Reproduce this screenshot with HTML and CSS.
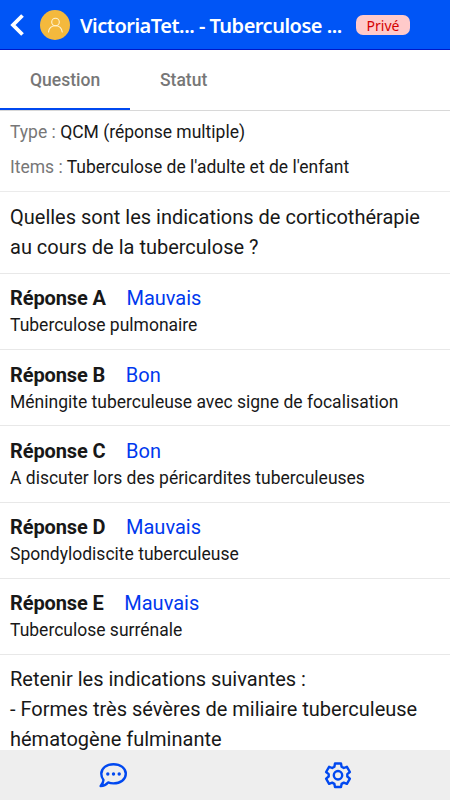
FILE: index.html
```html
<!DOCTYPE html>
<html lang="fr">
<head>
<meta charset="utf-8">
<title>Tuberculose</title>
<link rel="stylesheet" href="styles.css">
</head>
<body>
<div class="app">
  <header class="header">
    <svg class="back" viewBox="0 0 16 24"><path d="M13.500 2.500 4 12l9.500 9.500" /></svg>
    <span class="avatar"><svg viewBox="0 0 30 30"><circle cx="15.500" cy="12" r="3.800"/><path d="M8.500 22c.5-4.200 3.300-6.200 7-6.200s6.200 2 6.700 6.200"/></svg></span>
    <h1 class="title">VictoriaTet... - Tuberculose ...</h1>
    <span class="badge">Privé</span>
  </header>
  <nav class="tabs">
    <a class="tab tab-active">Question</a>
    <a class="tab">Statut</a>
  </nav>
  <main class="content">
    <section class="meta">
      <p><span class="label">Type :</span> <span class="type">QCM (réponse multiple)</span></p>
      <p><span class="label">Items :</span> <span class="items">Tuberculose de l'adulte et de l'enfant</span></p>
    </section>
    <section class="question">Quelles sont les indications de corticothérapie<br>au cours de la tuberculose ?</section>
    <section class="answer"><div class="head"><b>Réponse A</b><span class="verdict">Mauvais</span></div><p>Tuberculose pulmonaire</p></section>
    <section class="answer"><div class="head"><b>Réponse B</b><span class="verdict">Bon</span></div><p>Méningite tuberculeuse avec signe de focalisation</p></section>
    <section class="answer"><div class="head"><b>Réponse C</b><span class="verdict">Bon</span></div><p>A discuter lors des péricardites tuberculeuses</p></section>
    <section class="answer"><div class="head"><b>Réponse D</b><span class="verdict">Mauvais</span></div><p>Spondylodiscite tuberculeuse</p></section>
    <section class="answer"><div class="head"><b>Réponse E</b><span class="verdict">Mauvais</span></div><p>Tuberculose surrénale</p></section>
    <section class="comment">Retenir les indications suivantes :<br>- Formes très sévères de miliaire tuberculeuse<br>hématogène fulminante</section>
  </main>
  <footer class="footer">
    <div class="action"><svg class="chat" viewBox="0 0 28 26"><path d="M14.500 2.200c7 0 12.300 4 12.300 9.600s-5.300 9.600-12.300 9.600c-2 0-3.800-.3-5.400-1-1.600 1.900-3.900 3.500-7.500 3.600 1.900-2 2.800-4.100 2.900-6.100-1.400-1.700-2.200-3.700-2.200-6.100 0-5.600 5.200-9.600 12.200-9.600z"/><g class="dots"><circle cx="8.800" cy="12" r="1.700"/><circle cx="14.500" cy="12" r="1.700"/><circle cx="20.200" cy="12" r="1.700"/></g></svg></div>
    <div class="action"><svg class="gear" viewBox="0 0 28 28"><path d="M11 2.500h6l.6 3.200 2.200 1.300 3.100-1.200 3 5.200-2.600 2.100v2.400l2.600 2.100-3 5.200-3.100-1.200-2.200 1.300-.6 3.100h-6l-.6-3.100-2.200-1.300-3.100 1.200-3-5.200 2.600-2.100v-2.400L2.100 11l3-5.200L8.200 7l2.200-1.300z"/><circle cx="14" cy="14.250" r="4.200"/></svg></div>
  </footer>
</div>
</body>
</html>
```
FILE: styles.css
```css
* { box-sizing: border-box; }
body { margin: 0; font-family: Roboto, sans-serif; color: #181818; background: #fff; }
p, h1 { margin: 0; }
.app { display: flex; flex-direction: column; height: 800px; overflow: hidden; }
.header { display: flex; align-items: center; flex: none; height: 50px; padding-left: 9px; background: #0055f6; border-bottom: 1px solid #0018c8; }
.back { width: 16px; height: 24px; fill: none; stroke: #fff; stroke-width: 3.8; }
.avatar { width: 30px; height: 30px; margin-left: 15px; border-radius: 50%; background: #f4b93d; }
.avatar svg { display: block; width: 30px; height: 30px; fill: none; stroke: #fff3d2; stroke-width: 1.100; stroke-linecap: round; }
.title { width: 263px; margin-left: 10px; padding-top: 2px; font: 600 20px/28px "Noto Sans", sans-serif; letter-spacing: -.5px; color: #fff; white-space: nowrap; }
.badge { width: 54px; height: 20px; margin-left: 13px; border-radius: 7px; background: #ffcaca; color: #d40000; font: 14px/21px "Noto Sans", sans-serif; text-align: center; }
.tabs { display: flex; flex: none; height: 61px; border-bottom: 1px solid #d8d8d8; }
.tab { padding: 0 30px; height: 60px; font-size: 17.5px; line-height: 61px; font-weight: 500; color: #777; white-space: nowrap; }
.tab-active { width: 130px; border-bottom: 2px solid #0048f0; }
.content { flex: 1; min-height: 0; overflow: hidden; white-space: nowrap; font-weight: 400; }
.meta { height: 81px; padding: 4px 10px 0; border-bottom: 1px solid #ebebeb; font-size: 17.5px; line-height: 35px; }
.label { color: #777; }
.question { height: 82px; padding: 10px 10px 0; border-bottom: 1px solid #e8e8e8; font-size: 20px; line-height: 30px; }
.answer { height: 76.200px; padding: 9.400px 10px 0; border-bottom: 1px solid #e8e8e8; font-size: 17.5px; line-height: 24px; }
.head { display: flex; gap: 20.500px; font-size: 20px; line-height: 30px; }
.head b { font-weight: 700; letter-spacing: -.1px; }
.verdict { color: #0038ee; }
.comment { padding: 9px 10px 0; font-size: 20px; line-height: 30px; }
.footer { display: flex; flex: none; height: 50px; background: #eee; }
.action { display: flex; flex: 1; align-items: center; justify-content: center; }
.action svg { fill: none; stroke: #0048f0; stroke-width: 2.400; stroke-linejoin: round; }
.chat { width: 28px; height: 26px; }
.gear { width: 28px; height: 28px; }
.dots { fill: #0048f0; }
.action .dots { stroke: none; }
```
